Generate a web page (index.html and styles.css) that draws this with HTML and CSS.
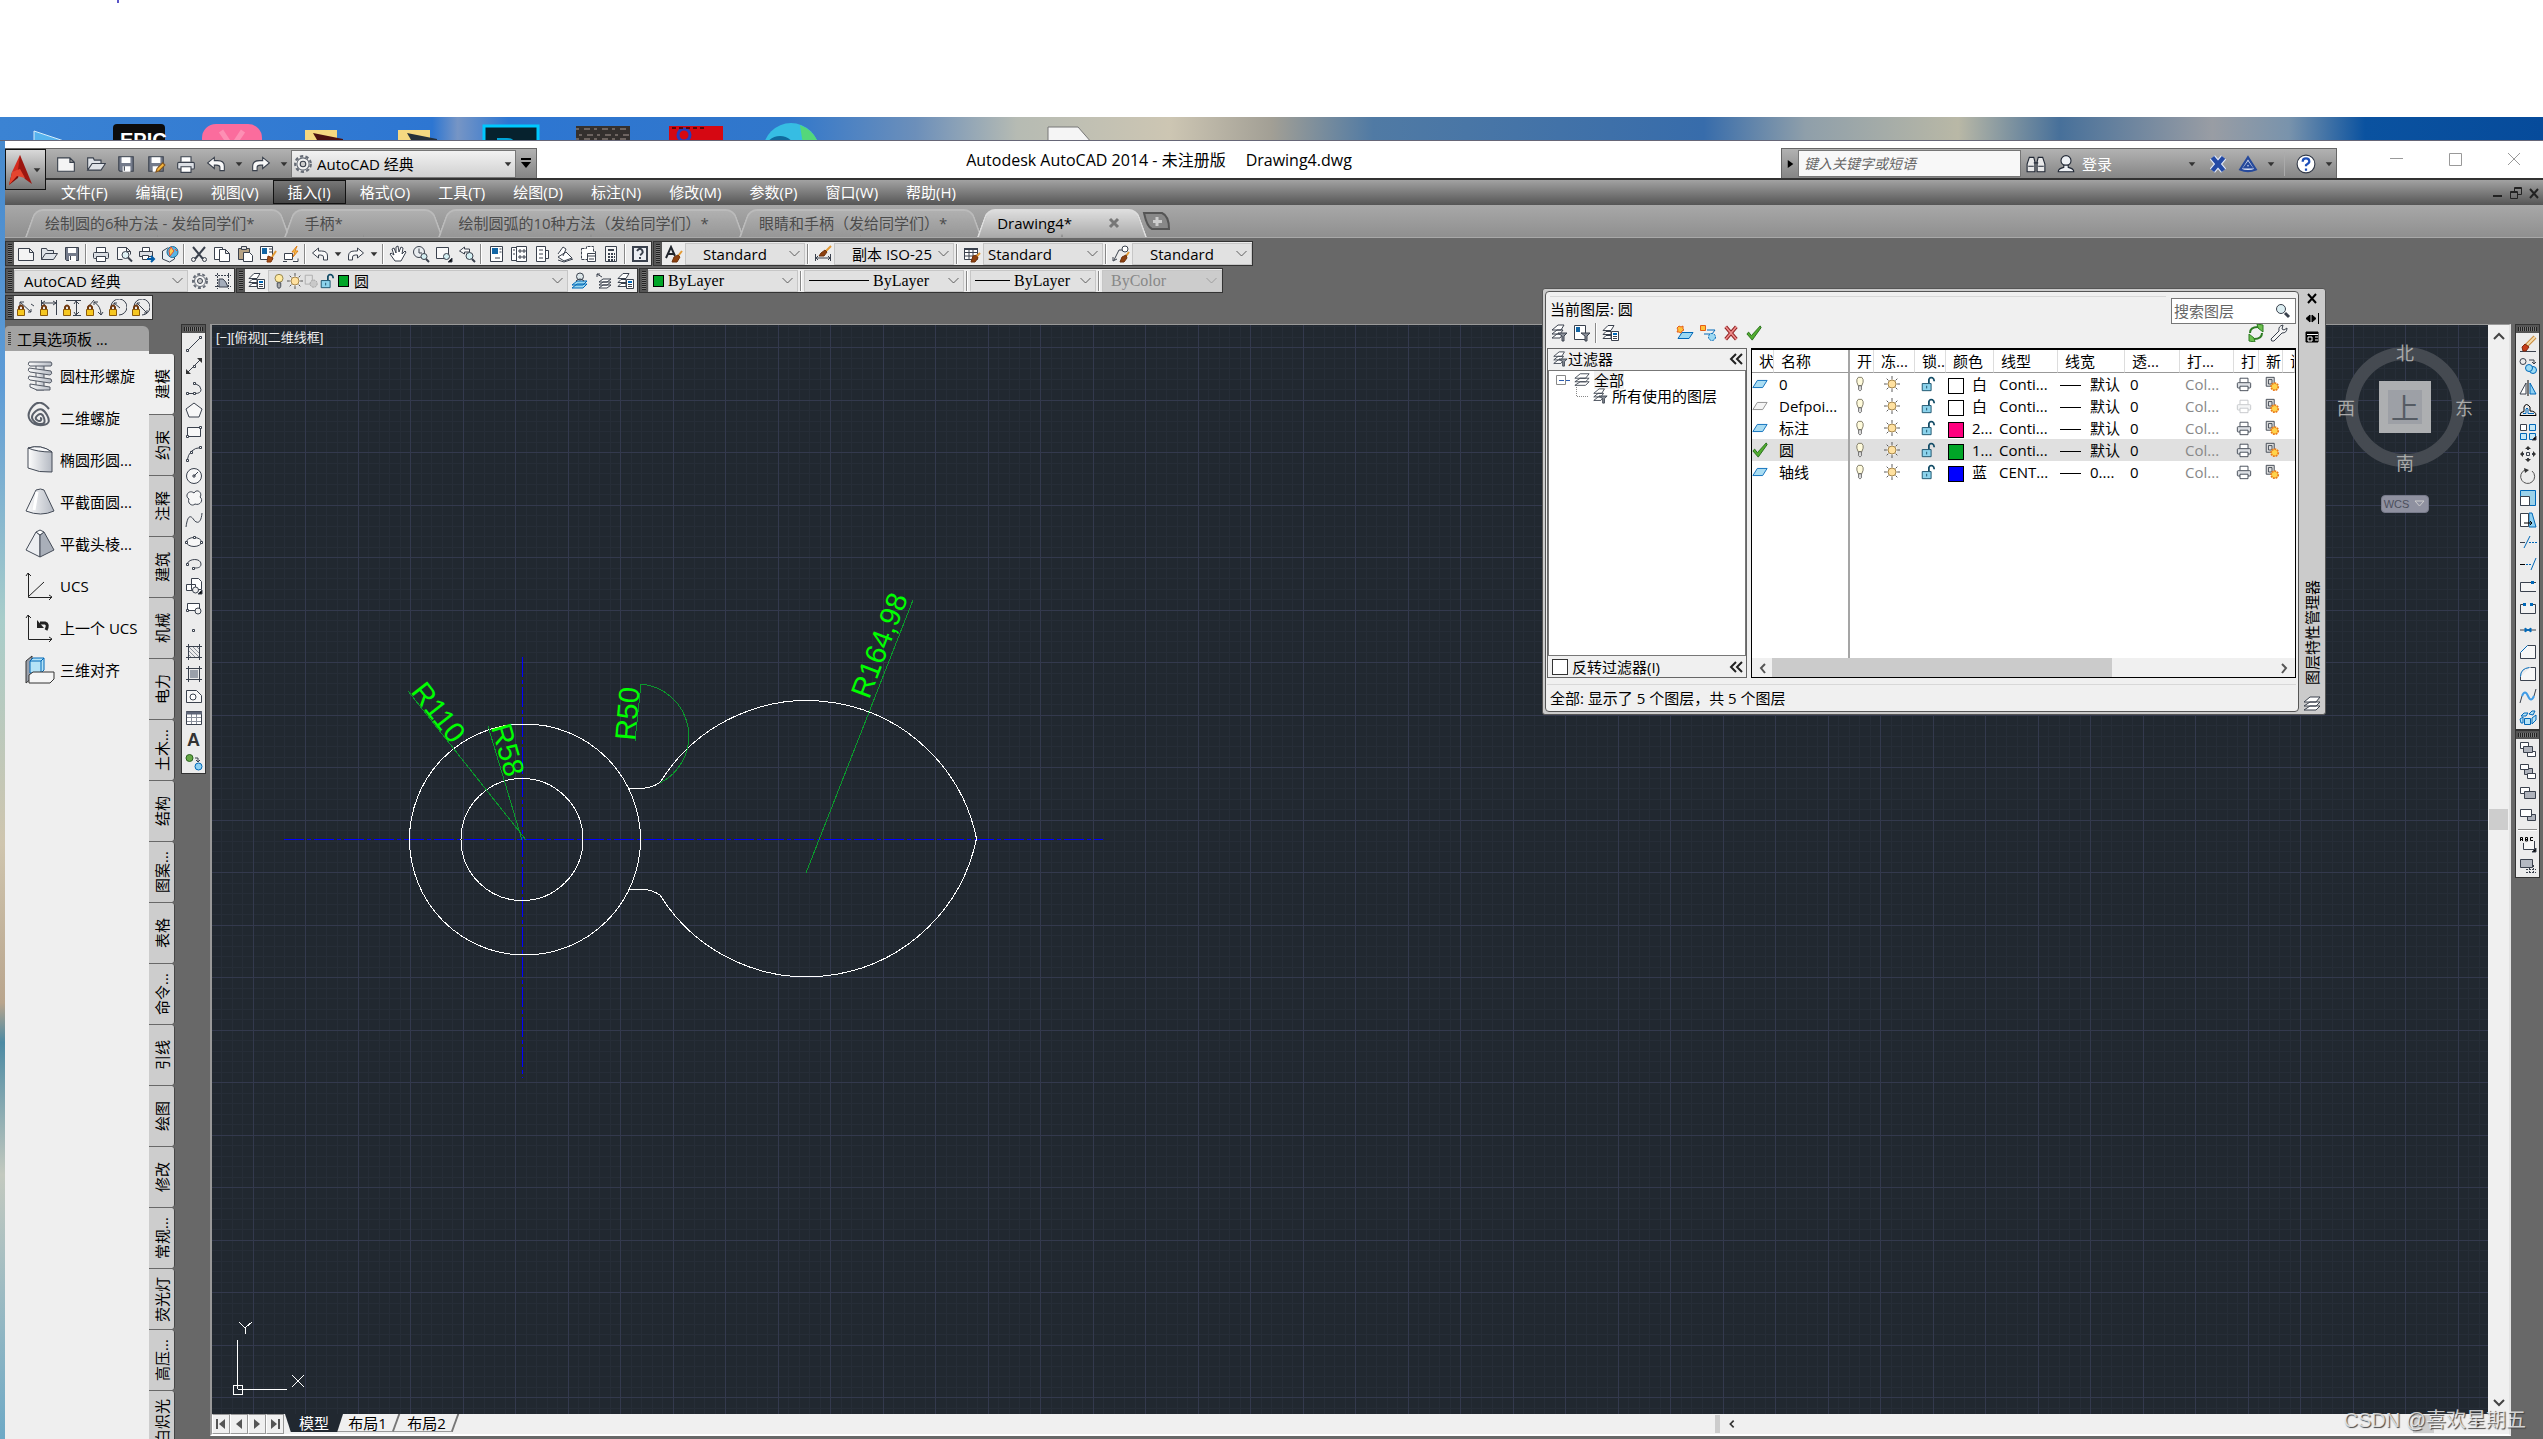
FILE: index.html
```html
<!DOCTYPE html>
<html lang="zh-CN">
<head>
    <meta charset="UTF-8">
    <meta name="viewport" content="width=device-width, initial-scale=1.0">
    <title>Autodesk AutoCAD 2014</title>
    <link rel="stylesheet" href="styles.css">
</head>
<body>
    <svg class="symbols" width="0" height="0" aria-hidden="true">
        <defs>
            <linearGradient id="metal" x1="0" y1="0" x2="1" y2="0"><stop offset="0" stop-color="#fdfdfd"/><stop offset="1" stop-color="#b4b9c2"/></linearGradient>
            <symbol id="new" viewBox="0 0 18 18"><path fill="#f4f4f4" d="M1.500 3.500h11l4 4v8h-15zM12.500 3.500v4h4"/></symbol>
            <symbol id="open" viewBox="0 0 18 18"><path fill="#dfe3e8" d="M1.500 14.500v-11h5l1 2h6v3M1.500 14.500l4-6h12l-4 6z"/></symbol>
            <symbol id="save" viewBox="0 0 18 18"><path fill="#747b8b" d="M2.500 2.500h13v13h-12l-1-1z"/><path fill="#fff" stroke="none" d="M5 3h8v5H5zM6 11h7v5H6z"/><path d="M7.500 11v4"/></symbol>
            <symbol id="saveas" viewBox="0 0 18 18"><path fill="#747b8b" d="M2.500 2.500h13v13h-13z"/><path fill="#fff" stroke="none" d="M5 3h8v5H5zM6 11h5v5H6z"/><path fill="#f5b63c" stroke="#86561d" d="M9 16l1-3 5-5 2 2-5 5z"/></symbol>
            <symbol id="print" viewBox="0 0 18 18"><path fill="#fff" d="M4.500 7V2.500h9V7"/><rect x="1.500" y="7.500" width="15" height="6" rx="1" fill="#dcdfe4"/><path fill="#fff" d="M4.500 11.500h9v5h-9z"/></symbol>
            <symbol id="preview" viewBox="0 0 18 18"><path fill="#f8f8f8" d="M2.500 14.500v-12h9l4 4v3M2.500 14.500h5M11.500 2.500v4h4"/><circle cx="10.500" cy="10" r="3.500" fill="#dff1f4"/><path stroke-width="2" d="M13 12.500l4 4"/></symbol>
            <symbol id="publish" viewBox="0 0 18 18"><path fill="#fff" d="M4.500 6V2.500h7V6"/><path fill="#dcdfe4" d="M1.500 6.500h13v5h-13z"/><path fill="#fff" d="M4.500 10.500h6v4h-6z"/><path stroke="#005ca8" stroke-width="2" d="M9 14h7M13 11l3 3-3 3"/></symbol>
            <symbol id="globe" viewBox="0 0 18 18"><path fill="#e7eef3" d="M1.500 6l5-3 7 2v9l-5 3-7-3z"/><circle cx="11.500" cy="7" r="5.500" fill="#58b5e4" stroke="#226b93"/><path fill="#f8cc4c" stroke="#e24f39" d="M10 2l3 4-4 5-1-5zM14 4l2 2"/></symbol>
            <symbol id="cut" viewBox="0 0 18 18"><path d="M3 2l10 12M15 2L5 14" stroke-width="2"/><circle cx="3.500" cy="14.500" r="2"/><circle cx="14.500" cy="14.500" r="2"/></symbol>
            <symbol id="copyclip" viewBox="0 0 18 18"><path fill="#fff" d="M1.500 2.500h8v12h-8z"/><path fill="#fff" d="M6.500 4.500h6l4 4v8h-10zM12.500 4.500v4h4"/></symbol>
            <symbol id="paste" viewBox="0 0 18 18"><path fill="#b6a284" d="M2.500 3.500h11v11h-11z"/><path fill="#ddd" d="M5.500 1.500h5v3h-5z"/><path fill="#fff" d="M7.500 7.500h6l3 3v6h-9z"/></symbol>
            <symbol id="match" viewBox="0 0 18 18"><path fill="#fff" d="M1.500 1.500h12v13h-12z"/><path fill="#1266a5" stroke="none" d="M3 3h5v6H3z"/><path d="M10 4h3M10 7h3"/><path stroke="#e39a34" stroke-width="2" d="M17 6l-4 6"/><path fill="#a74f15" stroke="#81370b" d="M9 11l5 2-2 4H8z"/></symbol>
            <symbol id="editor" viewBox="0 0 18 18"><path fill="#fff" d="M2.500 8.500h8v6h-8zM1 16.500h4M11 16.500h5v-3"/><path fill="#ffdc54" stroke="#dd7d1c" d="M15 1l-5 6h3l-2 5 5-6h-3z"/></symbol>
            <symbol id="undo" viewBox="0 0 18 18"><path fill="#f8f8f8" d="M1.500 8l6-5v3h3q6 0 6 5v4h-4v-3q0-2-3-2h-2v3z"/></symbol>
            <symbol id="redo" viewBox="0 0 18 18"><path fill="#f8f8f8" d="M16.500 8l-6-5v3h-3q-6 0-6 5v4h4v-3q0-2 3-2h2v3z"/></symbol>
            <symbol id="hand" viewBox="0 0 18 18"><path fill="#fff" d="M6 16l-5-7 1-1 3 2-2-6 2-1 2 5V2l2-1 1 6 2-5 2 1-1 6 3-3 1 1-5 9z"/></symbol>
            <symbol id="zoomrt" viewBox="0 0 18 18"><circle cx="7" cy="7" r="5.500" fill="#eaeef1"/><path d="M7 3.500V8h3"/><circle cx="12" cy="11.500" r="3" fill="#d4eff2"/><path stroke-width="2" d="M14 14l3 3"/></symbol>
            <symbol id="zoomwin" viewBox="0 0 18 18"><path fill="#f8f8f8" d="M1.500 2.500h12v11h-12z"/><circle cx="11.500" cy="11.500" r="3" fill="#d4eff2"/><path fill="#000" d="M17 13v4h-4z"/></symbol>
            <symbol id="zoomprev" viewBox="0 0 18 18"><path fill="#f8f8f8" d="M1.500 6l5-4v2h5v3h-5v2z"/><circle cx="11.500" cy="11" r="3.500" fill="#d4eff2"/><path stroke-width="2" d="M14 14l3 3"/></symbol>
            <symbol id="props" viewBox="0 0 18 18"><path fill="#fff" d="M3.500 1.500h12v15h-12z"/><path fill="#1266a5" stroke="none" d="M5 3h6v6H5z"/><path d="M12.500 4h2M12.500 7h2M8 13h5"/></symbol>
            <symbol id="dcenter" viewBox="0 0 18 18"><path fill="#fff" d="M1.500 2.500h5v13h-5zM6.500 1.500h10v15h-10z"/><path d="M3 5h2M3 9h2M9 5h2v2H9zM13 5h2v2h-2zM9 11h2v2H9zM13 11h2v2h-2z"/></symbol>
            <symbol id="palettes" viewBox="0 0 18 18"><path fill="#fff" d="M3.500 1.500h9v15h-9zM12.500 5.500h3v8h-3z"/><path d="M6 5h4M6 9h4M6 13h4"/></symbol>
            <symbol id="sheets" viewBox="0 0 18 18"><path fill="#fff" d="M2 12l8-5 6 6-8 3zM2 9L7 2l3 2-3 7M2 15l6 2 9-3"/></symbol>
            <symbol id="markup" viewBox="0 0 18 18"><path fill="#fff" stroke-dasharray="3 1" d="M2.500 3.500h5v-2h7v5h2v8h-14z"/><path fill="#fff" d="M8.500 8.500h8v8h-8z"/><path d="M8 11h8M10 14h5"/></symbol>
            <symbol id="calc" viewBox="0 0 18 18"><path fill="#f6f6f6" d="M3.500 1.500h11v15h-11z"/><path stroke-width="2" d="M6 5h6"/><path stroke-width="2" stroke-dasharray="2 1" d="M6 9h7M6 12h7M6 15h7"/></symbol>
            <symbol id="help" viewBox="0 0 18 18"><path fill="#eceff4" stroke-width="2" d="M2 2h14v14H2z"/><path stroke-width="2" d="M6 6q3-4 5-1t-2 5M9 12v2"/></symbol>
            <symbol id="textstyle" viewBox="0 0 18 18"><path stroke="#20252c" stroke-width="2" d="M1 13L6 2l4 9M3 9h6"/><path stroke="#e39a34" stroke-width="2" d="M17 6l-4 5"/><path fill="#8d410f" stroke="#6f330d" d="M9 12l4-2 2 2-3 5H7z"/></symbol>
            <symbol id="dimstyle" viewBox="0 0 18 18"><path d="M1.500 9v7M16.500 9v7M2 13h14M4 11l-2 2 2 2M14 11l2 2-2 2"/><path stroke="#e39a34" stroke-width="2" d="M17 1l-5 5"/><path fill="#8d410f" stroke="#6f330d" d="M7 8l4-3 2 2-3 4H5z"/></symbol>
            <symbol id="tablestyle" viewBox="0 0 18 18"><path fill="#fff" d="M1.500 3.500h13v11h-13zM1 7.500h13M1 11h13M6 4v10M10 4v10"/><path stroke-width="2" d="M1 4h14"/><path fill="#8d410f" stroke="#6f330d" d="M10 11l4-1 1 3-3 4H8z"/><path stroke="#e39a34" stroke-width="2" d="M17 8l-3 3"/></symbol>
            <symbol id="mleader" viewBox="0 0 18 18"><path d="M2 15l5-10h4M1 12v4l4-2"/><circle cx="13" cy="4" r="3" fill="#fff"/><path stroke="#e39a34" stroke-width="2" d="M17 7l-3 4"/><path fill="#8d410f" stroke="#6f330d" d="M10 12l4-2 1 3-3 4H8z"/></symbol>
            <symbol id="gear" viewBox="0 0 18 18"><circle cx="9" cy="9" r="7" fill="#f3f3f3" stroke-width="2" stroke-dasharray="3 2" stroke="#666c76"/><circle cx="9" cy="9" r="5.500" fill="#f3f3f3" stroke="#666c76"/><circle cx="9" cy="9" r="2.500" fill="#ccc"/></symbol>
            <symbol id="wslock" viewBox="0 0 18 18"><path stroke-dasharray="2 1" d="M1 3.500h16M1 14.500h16M3.500 1v16M14.500 1v16"/><path fill="#a5adba" d="M5 15V7h4q3 2 5 8z"/></symbol>
            <symbol id="layers" viewBox="0 0 18 18"><path fill="#fff" d="M1 6.500l5-5h6l-3 5zM1 10.500l3-3h5v3zM1 14.500l3-3h5v3z"/><path fill="#fff" d="M9.500 7.500h7v9h-7z"/><path stroke="#0068b8" stroke-width="2" d="M11 10h4"/><path d="M11 12.500h4M11 14.500h4"/></symbol>
            <symbol id="stack" viewBox="0 0 18 18"><path fill="#fff" d="M1 7l6-5h10l-4 5zM1 11l6-4h10l-4 4zM1 15l6-4h10l-4 4z"/></symbol>
            <symbol id="layiso" viewBox="0 0 18 18"><path fill="#9ad6ee" stroke="#0068b8" d="M1 13l5-4h10l-4 4zM1 16l5-4h10l-4 4z"/><circle cx="9" cy="4.500" r="3.500" fill="#dce6e9"/><path d="M5 9q4-4 8 0"/></symbol>
            <symbol id="layprev" viewBox="0 0 18 18"><path fill="#fff" d="M5 10l4-3h8l-4 3zM5 13l4-3h8l-4 3zM5 16l4-3h8l-4 3z"/><path d="M8 5l-5-3M3 5V2h3"/></symbol>
            <symbol id="bulb" viewBox="0 0 18 18"><circle cx="9" cy="6" r="4.500" fill="#ffeaa0" stroke="#8a7a45"/><path fill="#aaa" d="M7 11h4v4l-1 2H8l-1-2z"/></symbol>
            <symbol id="lamp" viewBox="0 0 18 18"><path fill="#fffbdc" stroke="#77725c" d="M7 11L5.500 7V4L7 1.500h4L12.500 4v3L11 11z"/><path fill="#eee" stroke="#555" d="M7.500 11h3v4.500l-1 1h-1l-1-1z"/></symbol>
            <symbol id="sun" viewBox="0 0 18 18"><path stroke="#444" d="M9 0v18M0 9h18M3 3l12 12M15 3L3 15"/><circle cx="9" cy="9" r="6" fill="#fff" stroke="none" opacity="0.6"/><circle cx="9" cy="9" r="4.500" fill="#ffe1a0" stroke="#9c7b3e"/></symbol>
            <symbol id="vpfreeze" viewBox="0 0 18 18"><path stroke="#aaa" d="M2.500 2.500h8v10h-8z"/><circle cx="12" cy="12" r="4" fill="#c9c9c9" stroke="#999" stroke-dasharray="2 1"/></symbol>
            <symbol id="unlock" viewBox="0 0 18 18"><path stroke="#134c66" stroke-width="2" d="M10 8V4q1-3 4-2 2 1 2 4"/><path fill="#8cd3ec" stroke="#134c66" d="M2.500 8.500h10v8h-10z"/><path stroke="#134c66" d="M7.500 11v3"/></symbol>
            <symbol id="lockbase" viewBox="0 0 18 18"><path stroke="#6f370d" stroke-width="2" d="M2 11V8q2-3 4 0v3"/><path fill="#f6c720" stroke="#8b5a0a" d="M.500 10.500h7v6h-7z"/></symbol>
            <symbol id="line" viewBox="0 0 18 18"><path d="M2.500 15.500l13-13"/><path fill="#fff" d="M1.500 14.500h2v2h-2zM14.500 1.500h2v2h-2z"/></symbol>
            <symbol id="xline" viewBox="0 0 18 18"><path d="M2 16L16 2"/><path fill="#333" stroke="none" d="M1 12v5h5zM12 1h5v5z"/><path fill="#fff" d="M8.500 8.500h2v2h-2z"/></symbol>
            <symbol id="pline" viewBox="0 0 18 18"><path d="M2 14.500h8q6 0 6-4t-6-6"/><path fill="#fff" d="M1.500 13.500h2v2h-2zM8.500 13.500h2v2h-2zM8.500 3.500h2v2h-2z"/></symbol>
            <symbol id="polygon" viewBox="0 0 18 18"><path fill="#f7f7f7" d="M9 2l8 6-3 8H4L1 8z"/></symbol>
            <symbol id="rect" viewBox="0 0 18 18"><path fill="#f7f7f7" d="M2.500 4.500h13v9h-13z"/><path fill="#fff" d="M1.500 12.500h2v2h-2zM14.500 3.500h2v2h-2z"/></symbol>
            <symbol id="arc" viewBox="0 0 18 18"><path d="M2 16Q4 3 16 2.500"/><path fill="#fff" d="M1.500 14.500h2v2h-2zM5.500 6.500h2v2h-2zM14.500 1.500h2v2h-2z"/></symbol>
            <symbol id="circle" viewBox="0 0 18 18"><circle cx="9" cy="9" r="7.500" fill="#f7f7f7"/><path d="M9 9l4-4M8 8h2v2H8z"/></symbol>
            <symbol id="cloud" viewBox="0 0 18 18"><path fill="#f7f7f7" d="M9 4c3-5 9 0 6 4 4 3 0 9-5 7-3 3-8-1-6-5-5-3 0-10 5-6z"/></symbol>
            <symbol id="spline" viewBox="0 0 18 18"><path d="M1 16C3 1 7 6 9 9s7 5 8-7"/></symbol>
            <symbol id="ellipse" viewBox="0 0 18 18"><ellipse cx="9" cy="9" rx="7.500" ry="4.500" fill="#f7f7f7"/><path fill="#fff" d="M.500 8.500h2v2h-2zM8.500 3.500h2v2h-2zM15.500 8.500h2v2h-2z"/></symbol>
            <symbol id="earc" viewBox="0 0 18 18"><path d="M2 9c2-6 14-6 14 0 0 4-4 4-7 4"/><path fill="#fff" d="M1.500 8.500h2v2h-2zM7.500 12.500h2v2h-2z"/></symbol>
            <symbol id="insert" viewBox="0 0 18 18"><path fill="#fff" d="M6.500 1.500h7l3 3v8h-10zM1.500 7.500h9v6h-9z"/><circle cx="10.500" cy="13" r="3" fill="#eee"/><path fill="#000" d="M17 13v4h-4z"/></symbol>
            <symbol id="block" viewBox="0 0 18 18"><path fill="#fff" d="M2.500 4.500h12v7h-12z"/><circle cx="13" cy="12" r="3" fill="#eee"/><path fill="#fff" d="M1.500 10.500h2v2h-2z"/></symbol>
            <symbol id="point" viewBox="0 0 18 18"><path fill="#fff" d="M7.500 8.500h2v2h-2z"/></symbol>
            <symbol id="hatch" viewBox="0 0 18 18"><path d="M1 3.500h16M1 14.500h16M3.500 1v16M14.500 1v16"/><path stroke="#8a909b" d="M4 4l10 10M4 8l6 6M8 4l6 6M4 12l2 2M12 4l2 2"/></symbol>
            <symbol id="gradient" viewBox="0 0 18 18"><path fill="#9aa0aa" stroke="none" d="M5 5h8v8H5z"/><path d="M1 3.500h16M1 14.500h16M3.500 1v16M14.500 1v16"/></symbol>
            <symbol id="region" viewBox="0 0 18 18"><path fill="#f7f7f7" d="M1.500 3.500h10l5 5v7h-15z"/><circle cx="8" cy="10" r="3" fill="#fff"/></symbol>
            <symbol id="table" viewBox="0 0 18 18"><path fill="#fff" d="M1.500 2.500h15v13h-15z"/><path stroke="#8a909b" d="M2 8.500h14M2 12.500h14M6.500 5v10M11.500 5v10"/><path stroke-width="3" stroke="#5e6577" d="M1 4h16"/></symbol>
            <symbol id="addsel" viewBox="0 0 18 18"><circle cx="4.500" cy="5" r="3.500" fill="#65a845" stroke="#2c6320"/><circle cx="13.500" cy="13.500" r="3.500" fill="#8fd0f2" stroke="#0068b8"/><path d="M10 5h3v4M11 7l2 2 2-2"/></symbol>
            <symbol id="erase" viewBox="0 0 18 18"><path d="M1 16.500h16"/><path stroke="#c98b3d" stroke-width="4" d="M7 11l9-9"/><path stroke="#f3dcae" stroke-width="2" d="M8 10l8-8"/><path fill="#c73d18" stroke="#7f290f" d="M3 12l3-3 4 3-3 4H4z"/></symbol>
            <symbol id="copy" viewBox="0 0 18 18"><circle cx="4" cy="4.500" r="3"/><g fill="#9ddcf5" stroke="#0068b8"><circle cx="14" cy="13" r="3.500"/><circle cx="10" cy="11" r="3.500"/></g><path d="M10 3h5v4M13 5l2 2 2-2"/></symbol>
            <symbol id="mirror" viewBox="0 0 18 18"><path fill="#fff" d="M7 4v11H1z"/><path fill="#8fd0f2" stroke="#0068b8" d="M11 4v11h6z"/><path stroke="#000" d="M9 1v16"/></symbol>
            <symbol id="offset" viewBox="0 0 18 18"><path stroke="#000" d="M1 14.500q0-4 4-4V6q2-5 6 0v4q6 0 6 4.500z"/><path stroke="#0068b8" d="M4 12.500h3V8q1-2 2 0v4.500h6"/></symbol>
            <symbol id="array" viewBox="0 0 18 18"><path fill="#fff" d="M1.500 1.500h6v6h-6z"/><path fill="#c6e8f7" stroke="#0068b8" d="M10.500 1.500h6v6h-6zM1.500 10.500h6v6h-6zM10.500 10.500h6v6h-6z"/><path fill="#000" d="M17 13v4h-4z"/></symbol>
            <symbol id="move" viewBox="0 0 18 18"><path stroke-width="2" d="M9 2v3M9 13v3M2 9h3M13 9h3"/><path fill="#333" stroke="none" d="M6 4l3-3 3 3zM6 14l3 3 3-3zM4 6L1 9l3 3zM14 6l3 3-3 3z"/><path d="M7.500 7.500h3v3h-3z"/></symbol>
            <symbol id="rotate" viewBox="0 0 18 18"><path stroke="#555" d="M13 4a7 7 0 1 1-7-1"/><path fill="#333" stroke="none" d="M5 1l5 2-4 3z"/></symbol>
            <symbol id="scale" viewBox="0 0 18 18"><path fill="#9cd2ea" stroke="#0068b8" d="M1.500 1.500h15v15h-15z"/><path fill="#fff" d="M1.500 7.500h9v9h-9z"/></symbol>
            <symbol id="stretch" viewBox="0 0 18 18"><path fill="#8fd0f2" stroke="#0068b8" d="M10 2h3l4 14h-7z"/><path fill="#fff" d="M1.500 2.500h8v13h-8z"/><path stroke="#000" d="M5 12h8M11 10l2 2-2 2"/></symbol>
            <symbol id="trim" viewBox="0 0 18 18"><path d="M1 9.500h5"/><path stroke="#0068b8" d="M5 15l6-12"/><path stroke="#0068b8" stroke-dasharray="2 1" d="M10 9.500h8"/></symbol>
            <symbol id="extend" viewBox="0 0 18 18"><path stroke="#000" d="M1 9.500h5"/><path stroke="#0068b8" d="M12 15l5-12"/><path stroke="#0068b8" stroke-dasharray="2 1" d="M7 9.500h6"/></symbol>
            <symbol id="breakpt" viewBox="0 0 18 18"><path fill="#f3f3f3" d="M17 5.500H1.500v9H17"/><path stroke="#0068b8" stroke-width="3" d="M12 5.500h3"/></symbol>
            <symbol id="break" viewBox="0 0 18 18"><path fill="#f3f3f3" d="M4 5.500H1.500v9h15v-9H14"/><path stroke="#0068b8" stroke-width="3" d="M4 5.500h3M11 5.500h3"/></symbol>
            <symbol id="join" viewBox="0 0 18 18"><path d="M1 9h16"/><path fill="#0068b8" stroke="#0068b8" d="M6 7l3 2-3 2zM12 7L9 9l3 2z"/></symbol>
            <symbol id="chamfer" viewBox="0 0 18 18"><path fill="#f7f7f7" d="M1.500 9.500v6h15v-13h-8"/><path stroke="#0068b8" d="M1.500 9.500l7-7"/></symbol>
            <symbol id="fillet" viewBox="0 0 18 18"><path fill="#f7f7f7" d="M1.500 11.500v4h15v-13h-5"/><path stroke="#0068b8" d="M1.500 11.500q0-8 9-9"/></symbol>
            <symbol id="blend" viewBox="0 0 18 18"><path d="M1 16l2-7M15 9l2-7"/><path stroke="#3e9be6" stroke-width="2" d="M3 9q3-7 6 0t6 0"/></symbol>
            <symbol id="explode" viewBox="0 0 18 18"><path fill="#b5e2f5" stroke="#0068b8" d="M2 7l3-3h4L7 7zM10 5l3-3h3l-2 4zM1 10l3-2v6H2zM5.500 9.500h6v6h-6zM13 9l4-3v5l-4 4z"/></symbol>
            <symbol id="order1" viewBox="0 0 18 18"><path fill="#fff" d="M1.500 1.500h8v6h-8zM8.500 10.500h8v5h-8z"/><path fill="#aeb2bb" d="M4.500 5.500h9v6h-9z"/></symbol>
            <symbol id="order2" viewBox="0 0 18 18"><path fill="#aeb2bb" d="M5.500 5.500h8v6h-8z"/><path fill="#fff" d="M1.500 1.500h8v5h-8zM8.500 10.500h8v5h-8z"/></symbol>
            <symbol id="order3" viewBox="0 0 18 18"><path fill="#fff" d="M1.500 2.500h9v6h-9z"/><path fill="#aeb2bb" d="M5.500 6.500h11v7h-11z"/></symbol>
            <symbol id="order4" viewBox="0 0 18 18"><path fill="#aeb2bb" d="M8.500 7.500h8v6h-8z"/><path fill="#fff" d="M1.500 2.500h11v7h-11z"/></symbol>
            <symbol id="abc" viewBox="0 0 18 18"><path stroke="#000" d="M1.500 6V2.500h2V6M1 4.500h3M6.500 6V2.500h2V6h-2M6 4.500h3M14 2.500h-2.500v3H14"/><path fill="#f7f7f7" d="M4.500 8v6.500h11V6"/><path fill="#000" d="M17 13v4h-4z"/></symbol>
            <symbol id="hatchback" viewBox="0 0 18 18"><path stroke-dasharray="2 1" d="M7 12.500h10M7 15.500h10M10.500 8v9M14.500 8v9"/><path fill="#b4b9c2" d="M1.500 2.500h12v8h-12z"/></symbol>
            <symbol id="filter" viewBox="0 0 18 18"><path fill="#fff" d="M2 6l6-5h6l-3 5zM2 10l5-4h6l-3 4zM2 14l5-4h6l-3 4z"/><path fill="#8b9099" d="M8 9h9l-3 3v5h-2v-5z"/></symbol>
            <symbol id="groupfilter" viewBox="0 0 18 18"><path fill="#fff" d="M1.500 1.500h11v14h-11z"/><path fill="#1266a5" stroke="none" d="M3 3h4v5H3z"/><path fill="#8b9099" d="M8 9h9l-3 3v5h-2v-5z"/></symbol>
            <symbol id="newlayer" viewBox="0 0 18 18"><path fill="#9cd8f2" stroke="#0068b8" d="M2 14.500l4-6h11l-4 6z"/><path fill="#ffc13a" stroke="#e55d16" d="M3 2l2 1 2-1v3l1 1-2 1-1 2-2-1H1l1-2-1-2z"/></symbol>
            <symbol id="newfrozen" viewBox="0 0 18 18"><path fill="#ffc13a" stroke="#e55d16" d="M1.500 1.500h5v5h-5z"/><path stroke="#0068b8" d="M8 6h8l-3 4H5"/><circle cx="13" cy="13" r="3.500" fill="#9cd8f2" stroke="#0068b8" stroke-dasharray="2 1"/></symbol>
            <symbol id="delete" viewBox="0 0 18 18"><path stroke="#8e2020" stroke-width="4" d="M3 2l12 14M15 2L3 16"/><path stroke="#ef8a8a" stroke-width="2" d="M3 2l12 14M15 2L3 16"/></symbol>
            <symbol id="check" viewBox="0 0 18 18"><path fill="#53ad30" stroke="#1f6913" d="M1 10l2-2 3 4L16 1l1 2L7 17z"/></symbol>
            <symbol id="refresh" viewBox="0 0 18 18"><path stroke="#2c7b22" stroke-width="2" d="M3 9q0-6 8-6M15 9q0 6-8 6"/><path fill="#6cc04e" stroke="#2c7b22" d="M10 0l6 1v7l-5-4zM8 18l-6-1v-7l5 4z"/></symbol>
            <symbol id="wrench" viewBox="0 0 18 18"><path fill="#f5f5f5" d="M1 15l8-8q-1-5 4-6l-1 4 2 1 3-2q0 5-5 5l-8 8q-3 1-3-2z"/></symbol>
            <symbol id="sheet" viewBox="0 0 18 18"><path fill="#a9dcf2" stroke="#0068b8" d="M1 13l5-8h11l-5 8z"/></symbol>
            <symbol id="sheetoff" viewBox="0 0 18 18"><path fill="#f4f4f4" stroke="#888" d="M1 13l5-8h11l-5 8z"/></symbol>
            <symbol id="vpnew" viewBox="0 0 18 18"><path fill="#ddd" d="M2.500 1.500h9v10h-9zM5 4h4v5H5z"/><circle cx="12" cy="12" r="4" fill="#ffd34c" stroke="#e9791c" stroke-width="2" stroke-dasharray="2 1"/></symbol>
            <symbol id="chev" viewBox="0 0 18 18"><path stroke="#444" d="M3 6l6 6 6-6"/></symbol>
            <symbol id="tri" viewBox="0 0 18 18"><path fill="#333" stroke="none" d="M3 6h12l-6 7z"/></symbol>
        </defs>
    </svg>

    <div class="page-top"><span class="cursor-mark"></span></div>
    <main class="desktop">
        <svg class="desk-icons" aria-hidden="true">
            <path fill="#56b3ee" stroke="#d5ecfa" d="M34 14v12h36z"/>
            <rect x="113" y="7" width="52" height="30" rx="4" fill="#0c0c0c"/><text x="120" y="30" class="epic">EPIC</text>
            <rect x="202" y="7" width="60" height="30" rx="14" fill="#fb6c9d"/><path stroke="#fd8fb4" stroke-width="5" d="M221 14l8 12M243 14l-8 12"/>
            <path fill="#f5d881" d="M305 13h32v20h-32zM398 13h32v20h-32z"/><path fill="#4b1010" d="M313 16l30 6v8h-22z"/><path fill="#26303a" d="M407 16l30 6v8h-22z"/>
            <rect x="484" y="9" width="54" height="30" fill="#06222e" stroke="#00c8ff" stroke-width="3"/><path stroke="#00a4d8" stroke-width="4" d="M497 23h10q7 0 7 8" fill="none"/>
            <rect x="576" y="9" width="54" height="20" fill="#34302e"/><path stroke="#6d6460" stroke-width="2" stroke-dasharray="3 5 6 4" d="M576 12h54M579 18h50M576 22h54"/>
            <rect x="669" y="9" width="54" height="20" fill="#d60812"/><circle cx="684" cy="18" r="6" fill="none" stroke="#263dba" stroke-width="3"/><path stroke="#5c0507" stroke-width="2" stroke-dasharray="4 3" d="M672 11h34"/>
            <circle cx="791" cy="34" r="28" fill="#36bde3"/><path fill="#54d77a" d="M800 8q15 6 19 20h-16z"/><circle cx="780" cy="35" r="16" fill="#116a9d"/>
            <path fill="#f5f5f5" stroke="#777" d="M1048 10h30l14 16h-44z"/>
        </svg>

        <div class="app">
            <header class="titlebar">
                <button class="app-button" aria-label="应用程序菜单">
                    <svg width="23" height="30" viewBox="0 0 23 30"><path fill="#d42a1e" d="M11 0l-8 17 7-2 2-6z"/><path fill="#9c1610" d="M11 0l12 29-7-5-7-9z"/><path fill="#7d0f0a" d="M3 17L0 30l9-7 2-8z"/><path fill="#e5452f" d="M3 17l8-3 5 9-8-2-8 9z"/></svg>
                    <svg class="ic tiny"><use href="#tri"/></svg>
                </button>
                <div class="quick">
                    <button aria-label="新建"><svg class="ic big"><use href="#new"/></svg></button>
                    <button aria-label="打开"><svg class="ic big"><use href="#open"/></svg></button>
                    <button aria-label="保存"><svg class="ic big"><use href="#save"/></svg></button>
                    <button aria-label="另存为"><svg class="ic big"><use href="#saveas"/></svg></button>
                    <button aria-label="打印"><svg class="ic big"><use href="#print"/></svg></button>
                    <button aria-label="放弃"><svg class="ic big"><use href="#undo"/></svg></button>
                    <button class="drop" aria-label="放弃列表"><svg class="ic tiny"><use href="#tri"/></svg></button>
                    <button aria-label="重做"><svg class="ic big"><use href="#redo"/></svg></button>
                    <button class="drop" aria-label="重做列表"><svg class="ic tiny"><use href="#tri"/></svg></button>
                    <div class="combo quick-space"><svg class="ic big"><use href="#gear"/></svg><select aria-label="工作空间"><option>AutoCAD 经典</option></select><svg class="ic tiny"><use href="#tri"/></svg></div>
                    <button class="quick-more" aria-label="自定义"><svg class="ic"><path stroke="#000" stroke-width="2" d="M4 4h10"/><path fill="#000" stroke="none" d="M4 7h10l-5 6z"/></svg></button>
                </div>
                <h1 class="title"><span>Autodesk AutoCAD 2014 - 未注册版</span><span>Drawing4.dwg</span></h1>
                <div class="info">
                    <button class="info-toggle" aria-label="折叠"><svg class="ic tiny" viewBox="0 0 18 18"><path fill="#000" stroke="none" d="M5 2l10 7-10 7z"/></svg></button>
                    <input class="info-search" type="text" placeholder="键入关键字或短语" aria-label="键入关键字或短语">
                    <button aria-label="搜索"><svg class="ic big" viewBox="0 0 18 18"><path fill="#e9e9e9" stroke="#222936" d="M3 3h4l1 4v9H1V9zM11 3h4l2 6v7h-7V7zM7 8h4M2 11h5M11 11h5"/></svg></button>
                    <button class="login"><svg class="ic big" viewBox="0 0 18 18"><circle cx="9" cy="6" r="4.500" fill="#eef1f5" stroke="#222936"/><path fill="#eef1f5" stroke="#222936" d="M2 16q0-3 5-4v-2h4v2q5 1 5 4z"/></svg><span>登录</span><svg class="ic tiny"><use href="#tri"/></svg></button>
                    <button aria-label="Exchange"><svg class="ic big" viewBox="0 0 18 18"><path stroke="#e2e9f8" stroke-width="6" d="M4 3l10 12M14 3L4 15"/><path stroke="#2349a5" stroke-width="4" d="M4 3l10 12M14 3L4 15"/></svg></button>
                    <button aria-label="保持连接"><svg class="ic big" viewBox="0 0 18 18"><path fill="#e2e9f8" stroke="#26499b" stroke-width="2" d="M9 3l7 11q-7 3-14 0zM9 8l3 4H6z"/></svg></button>
                    <button class="drop" aria-label="连接列表"><svg class="ic tiny"><use href="#tri"/></svg></button>
                    <span class="info-sep"></span>
                    <button aria-label="帮助"><svg class="ic big" viewBox="0 0 18 18"><circle cx="9" cy="9" r="8" fill="#fff" stroke="#333a48"/><path stroke="#1e4fb8" stroke-width="2" d="M6 7q0-3 3-3t3 3q0 1-3 3v1M9 13v2"/></svg></button>
                    <button class="drop" aria-label="帮助列表"><svg class="ic tiny"><use href="#tri"/></svg></button>
                </div>
                <div class="win-buttons">
                    <button aria-label="最小化"><svg class="ic wide"><path stroke="#999" d="M3 7.500h13"/></svg></button>
                    <button aria-label="最大化"><svg class="ic wide"><path stroke="#999" d="M3.500 2.500h12v12h-12z"/></svg></button>
                    <button aria-label="关闭"><svg class="ic wide"><path stroke="#999" d="M3 2l12 12M15 2L3 14"/></svg></button>
                </div>
            </header>

            <nav class="menubar">
                <button>文件(F)</button>
                <button>编辑(E)</button>
                <button>视图(V)</button>
                <button class="active">插入(I)</button>
                <button>格式(O)</button>
                <button>工具(T)</button>
                <button>绘图(D)</button>
                <button>标注(N)</button>
                <button>修改(M)</button>
                <button>参数(P)</button>
                <button>窗口(W)</button>
                <button>帮助(H)</button>
                <div class="mdi">
                    <button aria-label="最小化图形"><svg class="ic"><path stroke="#222" stroke-width="2" d="M4 12h9"/></svg></button>
                    <button aria-label="还原图形"><svg class="ic"><path stroke="#222" d="M3.500 7.500h7v7h-7zM7.500 7V3.500h7v7H11M7 4.500h8M3 8.500h8"/></svg></button>
                    <button aria-label="关闭图形"><svg class="ic"><path stroke="#222" stroke-width="2" d="M5 5l8 9M13 5l-8 9"/></svg></button>
                </div>
            </nav>

            <div class="file-tabs">
                <button class="file-tab"><span>绘制圆的6种方法 - 发给同学们*</span></button>
                <button class="file-tab"><span>手柄*</span></button>
                <button class="file-tab"><span>绘制圆弧的10种方法（发给同学们）*</span></button>
                <button class="file-tab"><span>眼睛和手柄（发给同学们）*</span></button>
                <button class="file-tab current"><span>Drawing4*</span><svg class="ic close"><path stroke="#777" stroke-width="3" d="M4 5l8 8M12 5l-8 8"/></svg></button>
                <button class="add-tab" aria-label="新建选项卡"><svg width="30" height="22"><path fill="#888" stroke="#555" stroke-width="2" d="M2 2h18q7 3 7 16H10Q5 16 2 2z"/><path stroke="#ccc" stroke-width="3" d="M15 6v9M11 10.500h9"/></svg></button>
            </div>

            <section class="docks">
                <div class="dock-row">
                    <div class="toolbar">
                        <span class="grip"></span>
                        <button aria-label="新建"><svg class="ic"><use href="#new"/></svg></button>
                        <button aria-label="打开"><svg class="ic"><use href="#open"/></svg></button>
                        <button aria-label="保存"><svg class="ic"><use href="#save"/></svg></button>
                        <span class="sep"></span>
                        <button aria-label="打印"><svg class="ic"><use href="#print"/></svg></button>
                        <button aria-label="打印预览"><svg class="ic"><use href="#preview"/></svg></button>
                        <button aria-label="发布"><svg class="ic"><use href="#publish"/></svg></button>
                        <button aria-label="三维打印"><svg class="ic"><use href="#globe"/></svg></button>
                        <span class="sep"></span>
                        <button aria-label="剪切"><svg class="ic"><use href="#cut"/></svg></button>
                        <button aria-label="复制"><svg class="ic"><use href="#copyclip"/></svg></button>
                        <button aria-label="粘贴"><svg class="ic"><use href="#paste"/></svg></button>
                        <button aria-label="特性匹配"><svg class="ic"><use href="#match"/></svg></button>
                        <button aria-label="块编辑器"><svg class="ic"><use href="#editor"/></svg></button>
                        <span class="sep"></span>
                        <button aria-label="放弃"><svg class="ic"><use href="#undo"/></svg></button>
                        <button class="drop" aria-label="放弃列表"><svg class="ic tiny"><use href="#tri"/></svg></button>
                        <button aria-label="重做"><svg class="ic"><use href="#redo"/></svg></button>
                        <button class="drop" aria-label="重做列表"><svg class="ic tiny"><use href="#tri"/></svg></button>
                        <span class="sep"></span>
                        <button aria-label="平移"><svg class="ic"><use href="#hand"/></svg></button>
                        <button aria-label="实时缩放"><svg class="ic"><use href="#zoomrt"/></svg></button>
                        <button aria-label="窗口缩放"><svg class="ic"><use href="#zoomwin"/></svg></button>
                        <button aria-label="缩放上一个"><svg class="ic"><use href="#zoomprev"/></svg></button>
                        <span class="sep"></span>
                        <button aria-label="特性"><svg class="ic"><use href="#props"/></svg></button>
                        <button aria-label="设计中心"><svg class="ic"><use href="#dcenter"/></svg></button>
                        <button aria-label="工具选项板"><svg class="ic"><use href="#palettes"/></svg></button>
                        <button aria-label="图纸集"><svg class="ic"><use href="#sheets"/></svg></button>
                        <button aria-label="标记集"><svg class="ic"><use href="#markup"/></svg></button>
                        <button aria-label="计算器"><svg class="ic"><use href="#calc"/></svg></button>
                        <span class="sep"></span>
                        <button aria-label="帮助"><svg class="ic"><use href="#help"/></svg></button>
                    </div>
                    <div class="toolbar">
                        <span class="grip"></span>
                        <button aria-label="文字样式"><svg class="ic"><use href="#textstyle"/></svg></button>
                        <div class="combo w120"><select class="inset" aria-label="文字样式"><option>Standard</option></select><svg class="ic chev"><use href="#chev"/></svg></div>
                        <span class="sep"></span>
                        <button aria-label="标注样式"><svg class="ic"><use href="#dimstyle"/></svg></button>
                        <div class="combo w120"><select class="inset" aria-label="标注样式"><option>副本 ISO-25</option></select><svg class="ic chev"><use href="#chev"/></svg></div>
                        <span class="sep"></span>
                        <button aria-label="表格样式"><svg class="ic"><use href="#tablestyle"/></svg></button>
                        <div class="combo w120"><select aria-label="表格样式"><option>Standard</option></select><svg class="ic chev"><use href="#chev"/></svg></div>
                        <span class="sep"></span>
                        <button aria-label="引线样式"><svg class="ic"><use href="#mleader"/></svg></button>
                        <div class="combo w120"><select class="inset" aria-label="引线样式"><option>Standard</option></select><svg class="ic chev"><use href="#chev"/></svg></div>
                    </div>
                </div>
                <div class="dock-row">
                    <div class="toolbar">
                        <span class="grip"></span>
                        <div class="combo space-combo"><select aria-label="工作空间"><option>AutoCAD 经典</option></select><svg class="ic chev"><use href="#chev"/></svg></div>
                        <button aria-label="工作空间设置"><svg class="ic"><use href="#gear"/></svg></button>
                        <button aria-label="锁定位置"><svg class="ic"><use href="#wslock"/></svg></button>
                    </div>
                    <div class="toolbar">
                        <span class="grip"></span>
                        <button aria-label="图层特性"><svg class="ic"><use href="#layers"/></svg></button>
                        <div class="combo layer-combo">
                            <span class="layer-flags"><svg class="ic small"><use href="#bulb"/></svg><svg class="ic small"><use href="#sun"/></svg><svg class="ic small"><use href="#vpfreeze"/></svg><svg class="ic small"><use href="#unlock"/></svg><i class="chip green"></i></span>
                            <select aria-label="图层"><option>圆</option></select><svg class="ic chev"><use href="#chev"/></svg>
                        </div>
                        <button aria-label="置为当前"><svg class="ic"><use href="#layiso"/></svg></button>
                        <button aria-label="上一个图层"><svg class="ic"><use href="#layprev"/></svg></button>
                        <button aria-label="图层状态"><svg class="ic"><use href="#layers"/></svg></button>
                    </div>
                    <div class="toolbar bylayer">
                        <span class="grip"></span>
                        <div class="combo w150"><i class="chip green"></i><select aria-label="颜色"><option>ByLayer</option></select><svg class="ic chev"><use href="#chev"/></svg></div>
                        <span class="sep"></span>
                        <div class="combo w160"><i class="rule long"></i><select aria-label="线型"><option>ByLayer</option></select><svg class="ic chev"><use href="#chev"/></svg></div>
                        <span class="sep"></span>
                        <div class="combo w126"><i class="rule"></i><select aria-label="线宽"><option>ByLayer</option></select><svg class="ic chev"><use href="#chev"/></svg></div>
                        <span class="sep"></span>
                        <div class="combo w120 off"><select aria-label="打印样式" disabled><option>ByColor</option></select><svg class="ic chev"><use href="#chev"/></svg></div>
                    </div>
                </div>
                <div class="dock-row">
                    <div class="toolbar">
                        <span class="grip"></span>
                        <button aria-label="对齐约束"><svg class="ic"><path d="M3 3l11 10M3 7V3h4M11 13h3v-3M14 5l3 2"/><use href="#lockbase"/></svg></button>
                        <button aria-label="水平约束"><svg class="ic"><path d="M1.500 1v6M16.500 1v15M2 4h14M5 2L2 4l3 2M13 2l3 2-3 2"/><use href="#lockbase"/></svg></button>
                        <button aria-label="竖直约束"><svg class="ic"><path d="M3 1.500h15M10 16.500h8M13.500 2v14M11 5l2-3 3 3M11 13l2 3 3-3"/><use href="#lockbase"/></svg></button>
                        <button aria-label="角度约束"><svg class="ic"><path d="M2 8L8 1M8 3q7 4 7 13M8 6V3h4M12 13l3 3 2-3"/><use href="#lockbase"/></svg></button>
                        <button aria-label="半径约束"><svg class="ic"><path d="M2 7a8 8 0 1 1 8 9M11 9L5 4M5 7V4h3"/><use href="#lockbase"/></svg></button>
                        <button aria-label="直径约束"><svg class="ic"><path d="M2 7a8 8 0 1 1 8 9M15 14L5 4M5 7V4h3M15 11v3h-3"/><use href="#lockbase"/></svg></button>
                    </div>
                </div>
            </section>

            <section class="workspace">
                <aside class="palette">
                    <h2 class="palette-title"><span class="dots"></span>工具选项板 ...</h2>
                    <div class="palette-main">
                        <ul class="tools">
                            <li><svg class="tool-ic" viewBox="0 0 30 32"><g fill="url(#metal)" stroke="#555b66"><path d="M11 3h8v27h-8z"/><path d="M4 2h22q2 2 0 4H5q-3-1-1-4zM4 8l22 3q2 3-1 4L5 12q-3-1-1-4zM4 16l22 3q2 3-1 4L5 20q-3-1-1-4zM5 24l20 3v3H12l-7-3z"/></g></svg>圆柱形螺旋</li>
                            <li><svg class="tool-ic" viewBox="0 0 30 32"><path fill="none" stroke="#5a606a" stroke-width="2" d="M15 16q2 0 1 2t-4 0 1-5 6 3-3 6-8-4 3-9 11 4-4 10-13-5 3-14 16 3"/></svg>二维螺旋</li>
                            <li><svg class="tool-ic" viewBox="0 0 30 32"><path fill="url(#metal)" stroke="#444b57" d="M3 4q13-4 24 4v20q-13 1-24-4z"/><path fill="#f6f7f9" stroke="#444b57" d="M3 4q13-4 24 4Q12 8 3 4z"/></svg>椭圆形圆...</li>
                            <li><svg class="tool-ic" viewBox="0 0 30 32"><path fill="url(#metal)" stroke="#444b57" d="M11 4q5-2 8 0l10 21q-13 6-28 0z"/><path stroke="#fff" stroke-width="3" d="M12 6L9 24"/></svg>平截面圆...</li>
                            <li><svg class="tool-ic" viewBox="0 0 30 32"><path fill="#eceef1" stroke="#444b57" d="M11 4l4 3v22L1 22z"/><path fill="#a9afb9" stroke="#444b57" d="M19 4l-4 3v22l14-7z"/><path fill="#fff" stroke="#444b57" d="M11 4l4-2 4 2-4 3z"/></svg>平截头棱...</li>
                            <li><svg class="tool-ic" viewBox="0 0 30 32"><path fill="none" stroke="#222" d="M3.500 3v24.500h23M3 27L19 12M1 6l2-3 3 3M24 25l3 2-3 3"/></svg>UCS</li>
                            <li><svg class="tool-ic" viewBox="0 0 30 32"><path fill="none" stroke="#222" d="M3.500 3v24.500h23M1 6l2-3 3 3M24 25l3 2-3 3"/><path fill="none" stroke="#222" stroke-width="3" d="M15 11h5q4 1 1 7"/><path fill="#222" d="M12 8v8h7z"/></svg>上一个 UCS</li>
                            <li><svg class="tool-ic" viewBox="0 0 30 32"><path fill="#9aa0aa" stroke="#333" d="M1 7l6-5v22l-6 5z"/><path fill="#b4e3f7" stroke="#0068b8" d="M5 7l3-3h11v12l-3 3H5zM5 7h11v12M16 7l3-3"/><path fill="#f5f5f5" stroke="#333" d="M4 21l4-3h21v7l-4 4H4z"/></svg>三维对齐</li>
                        </ul>
                        <div class="side-tabs">
                            <button class="current">建模</button>
                            <button>约束</button>
                            <button>注释</button>
                            <button>建筑</button>
                            <button>机械</button>
                            <button>电力</button>
                            <button>土木...</button>
                            <button>结构</button>
                            <button>图案...</button>
                            <button>表格</button>
                            <button>命令...</button>
                            <button>引线</button>
                            <button>绘图</button>
                            <button>修改</button>
                            <button>常规...</button>
                            <button>荧光灯</button>
                            <button>高压...</button>
                            <button>白炽光</button>
                        </div>
                    </div>
                </aside>

                <div class="toolbar vertical">
                    <span class="grip"></span>
                    <button aria-label="直线"><svg class="ic"><use href="#line"/></svg></button>
                    <button aria-label="构造线"><svg class="ic"><use href="#xline"/></svg></button>
                    <button aria-label="多段线"><svg class="ic"><use href="#pline"/></svg></button>
                    <button aria-label="多边形"><svg class="ic"><use href="#polygon"/></svg></button>
                    <button aria-label="矩形"><svg class="ic"><use href="#rect"/></svg></button>
                    <button aria-label="圆弧"><svg class="ic"><use href="#arc"/></svg></button>
                    <button aria-label="圆"><svg class="ic"><use href="#circle"/></svg></button>
                    <button aria-label="修订云线"><svg class="ic"><use href="#cloud"/></svg></button>
                    <button aria-label="样条曲线"><svg class="ic"><use href="#spline"/></svg></button>
                    <button aria-label="椭圆"><svg class="ic"><use href="#ellipse"/></svg></button>
                    <button aria-label="椭圆弧"><svg class="ic"><use href="#earc"/></svg></button>
                    <button aria-label="插入块"><svg class="ic"><use href="#insert"/></svg></button>
                    <button aria-label="创建块"><svg class="ic"><use href="#block"/></svg></button>
                    <button aria-label="点"><svg class="ic"><use href="#point"/></svg></button>
                    <button aria-label="图案填充"><svg class="ic"><use href="#hatch"/></svg></button>
                    <button aria-label="渐变色"><svg class="ic"><use href="#gradient"/></svg></button>
                    <button aria-label="面域"><svg class="ic"><use href="#region"/></svg></button>
                    <button aria-label="表格"><svg class="ic"><use href="#table"/></svg></button>
                    <button class="mtext">A</button>
                    <button aria-label="添加选定对象"><svg class="ic"><use href="#addsel"/></svg></button>
                </div>

                <div class="drawing">
                    <div class="canvas-row">
                        <div class="canvas">
                            <svg class="scene">
                                <defs>
                                    <!-- two major cells per tile keep the lines on whole pixels -->
                                    <pattern id="grid" width="105" height="105" x="41" y="75" patternUnits="userSpaceOnUse">
                                        <path stroke="#262d37" d="M10.500 0v105M21.500 0v105M31.500 0v105M42.500 0v105M63.500 0v105M73.500 0v105M84.500 0v105M94.500 0v105M0 10.500h105M0 21.500h105M0 31.500h105M0 42.500h105M0 63.500h105M0 73.500h105M0 84.500h105M0 94.500h105"/>
                                        <path stroke="#33394d" d="M.500 0v105M52.500 0v105M0 .500h105M0 52.500h105"/>
                                    </pattern>
                                </defs>
                                <rect width="100%" height="100%" fill="url(#grid)"/>
                                <g transform="translate(-212 -325)" fill="none" shape-rendering="crispEdges">
                                    <path class="axis" d="M284 839.500h819M522.500 657v421"/>
                                    <g stroke="#fff">
                                        <circle cx="525" cy="839.500" r="115.500"/>
                                        <circle cx="522" cy="839.500" r="61"/>
                                        <path d="M629 788.500h10q12 0 21-6A173 173 0 0 1 976.500 838.500A173 173 0 0 1 660 895q-9-6-21-6h-10"/>
                                    </g>
                                    <g stroke="#0a9a2c">
                                        <path d="M408 691l118 149M488 726l34 114M913 600L806 873M635 741l6-57"/>
                                        <path d="M641 684A52.400 52.400 0 0 1 660 783"/>
                                    </g>
                                    <g class="dims">
                                        <text transform="translate(410 692) rotate(52)">R110</text>
                                        <text transform="translate(491 727) rotate(74)">R58</text>
                                        <text transform="translate(635 741) rotate(-85)">R50</text>
                                        <text transform="translate(869 700) rotate(-69)">R164,98</text>
                                    </g>
                                </g>
                            </svg>
                            <div class="view-label">[−][俯视][二维线框]</div>
                            <svg class="ucs" width="80" height="80"><g fill="none" stroke="#fff" shape-rendering="crispEdges"><path d="M5.500 65V20M5.500 69.500h49M1.500 65.500h9v9h-9zM5.500 65v4"/><path d="M7 2l6 6v6M20 2l-7 6M60 55l12 12M72 55L60 67"/></g></svg>
                            <div class="viewcube">
                                <span class="north">北</span><span class="west">西</span>
                                <span class="face">上</span>
                                <span class="east">东</span><span class="south">南</span>
                            </div>
                            <button class="wcs">WCS<svg width="12" height="8"><path fill="none" stroke="#ccc" d="M1 1h9L5.500 6z"/></svg></button>
                        </div>
                        <div class="vscroll"><svg class="ic"><path stroke="#444" stroke-width="2" d="M4 12l5-5 5 5"/></svg><i></i><svg class="ic"><path stroke="#444" stroke-width="2" d="M4 6l5 5 5-5"/></svg></div>
                    </div>
                    <div class="layout-bar">
                        <div class="layout-nav">
                            <button aria-label="第一个"><svg class="ic"><path stroke="#555" stroke-width="2" d="M5 4v10"/><path fill="#555" stroke="none" d="M13 4v10L7 9z"/></svg></button>
                            <button aria-label="上一个"><svg class="ic"><path fill="#555" stroke="none" d="M12 4v10L6 9z"/></svg></button>
                            <button aria-label="下一个"><svg class="ic"><path fill="#555" stroke="none" d="M6 4v10l6-5z"/></svg></button>
                            <button aria-label="最后一个"><svg class="ic"><path stroke="#555" stroke-width="2" d="M13 4v10"/><path fill="#555" stroke="none" d="M5 4v10l6-5z"/></svg></button>
                        </div>
                        <button class="layout model"><span>模型</span></button>
                        <button class="layout"><span>布局1</span></button>
                        <button class="layout"><span>布局2</span></button>
                        <div class="hscroll"><b></b><svg class="ic tiny" viewBox="0 0 18 18"><path stroke="#333" stroke-width="3" d="M12 3L6 9l6 6"/></svg><i></i><svg class="ic tiny" viewBox="0 0 18 18"><path stroke="#333" stroke-width="3" d="M6 3l6 6-6 6"/></svg></div>
                    </div>
                </div>

                <div class="right-dock">
                    <div class="toolbar vertical">
                        <span class="grip"></span>
                        <button aria-label="删除"><svg class="ic"><use href="#erase"/></svg></button>
                        <button aria-label="复制"><svg class="ic"><use href="#copy"/></svg></button>
                        <button aria-label="镜像"><svg class="ic"><use href="#mirror"/></svg></button>
                        <button aria-label="偏移"><svg class="ic"><use href="#offset"/></svg></button>
                        <button aria-label="阵列"><svg class="ic"><use href="#array"/></svg></button>
                        <button aria-label="移动"><svg class="ic"><use href="#move"/></svg></button>
                        <button aria-label="旋转"><svg class="ic"><use href="#rotate"/></svg></button>
                        <button aria-label="缩放"><svg class="ic"><use href="#scale"/></svg></button>
                        <button aria-label="拉伸"><svg class="ic"><use href="#stretch"/></svg></button>
                        <button aria-label="修剪"><svg class="ic"><use href="#trim"/></svg></button>
                        <button aria-label="延伸"><svg class="ic"><use href="#extend"/></svg></button>
                        <button aria-label="打断于点"><svg class="ic"><use href="#breakpt"/></svg></button>
                        <button aria-label="打断"><svg class="ic"><use href="#break"/></svg></button>
                        <button aria-label="合并"><svg class="ic"><use href="#join"/></svg></button>
                        <button aria-label="倒角"><svg class="ic"><use href="#chamfer"/></svg></button>
                        <button aria-label="圆角"><svg class="ic"><use href="#fillet"/></svg></button>
                        <button aria-label="光顺曲线"><svg class="ic"><use href="#blend"/></svg></button>
                        <button aria-label="分解"><svg class="ic"><use href="#explode"/></svg></button>
                    </div>
                    <div class="toolbar vertical">
                        <span class="grip"></span>
                        <button aria-label="前置"><svg class="ic"><use href="#order1"/></svg></button>
                        <button aria-label="后置"><svg class="ic"><use href="#order2"/></svg></button>
                        <button aria-label="置于对象之上"><svg class="ic"><use href="#order3"/></svg></button>
                        <button aria-label="置于对象之下"><svg class="ic"><use href="#order4"/></svg></button>
                        <span class="sep"></span>
                        <button aria-label="文字前置"><svg class="ic"><use href="#abc"/></svg></button>
                        <button aria-label="图案填充后置"><svg class="ic"><use href="#hatchback"/></svg></button>
                    </div>
                </div>
            </section>

            <section class="layer-window">
                <div class="layer-body">
                    <div class="layer-head">
                        <p>当前图层: 圆</p>
                        <div class="layer-search"><input type="text" placeholder="搜索图层" aria-label="搜索图层"><svg class="ic"><circle cx="7" cy="7" r="4.500" fill="#dceef2"/><path stroke-width="3" d="M11 11l4 4"/></svg></div>
                    </div>
                    <div class="layer-tools">
                        <button aria-label="新建特性过滤器"><svg class="ic"><use href="#filter"/></svg></button>
                        <button aria-label="新建组过滤器"><svg class="ic"><use href="#groupfilter"/></svg></button>
                        <span class="sep"></span>
                        <button aria-label="图层状态管理器"><svg class="ic"><use href="#layers"/></svg></button>
                        <span class="gap"></span>
                        <button aria-label="新建图层"><svg class="ic"><use href="#newlayer"/></svg></button>
                        <button aria-label="新建冻结图层"><svg class="ic"><use href="#newfrozen"/></svg></button>
                        <button aria-label="删除图层"><svg class="ic small"><use href="#delete"/></svg></button>
                        <button aria-label="置为当前"><svg class="ic small"><use href="#check"/></svg></button>
                        <span class="fill"></span>
                        <button aria-label="刷新"><svg class="ic"><use href="#refresh"/></svg></button>
                        <button aria-label="设置"><svg class="ic"><use href="#wrench"/></svg></button>
                    </div>
                    <div class="layer-panes">
                        <div class="tree">
                            <div class="tree-head"><svg class="ic small"><use href="#filter"/></svg>过滤器<svg class="ic dbl"><path stroke="#222" stroke-width="2" d="M9 4L4 9l5 5M15 4l-5 5 5 5"/></svg></div>
                            <div class="tree-list">
                                <div><svg class="ic"><path fill="#fff" stroke="#888" d="M4.500 4.500h9v9h-9z"/><path stroke="#2c5cb0" d="M7 9.500h5M14 9.500h4"/></svg><svg class="ic small"><use href="#stack"/></svg><span class="picked">全部</span></div>
                                <div class="sub"><svg class="ic"><path stroke="#888" stroke-dasharray="1 1" d="M6.500 0v9.500h12"/></svg><svg class="ic small"><use href="#filter"/></svg><span>所有使用的图层</span></div>
                            </div>
                            <label class="tree-foot"><input type="checkbox">反转过滤器(I)<svg class="ic dbl"><path stroke="#222" stroke-width="2" d="M9 4L4 9l5 5M15 4l-5 5 5 5"/></svg></label>
                        </div>
                        <div class="grid">
                            <div class="grid-area">
                                <table>
                                    <colgroup><col class="c-st"><col class="c-nm"><col class="c-on"><col class="c-fz"><col class="c-lk"><col class="c-cl"><col class="c-lt"><col class="c-lw"><col class="c-tr"><col class="c-ps"><col class="c-pl"><col class="c-vp"><col></colgroup>
                                    <thead><tr><th>状</th><th>名称</th><th>开</th><th>冻...</th><th>锁..</th><th>颜色</th><th>线型</th><th>线宽</th><th>透...</th><th>打...</th><th>打</th><th>新</th><th>说</th></tr></thead>
                                    <tbody>
                                        <tr><td><svg class="ic small"><use href="#sheet"/></svg></td><td>0</td><td><svg class="ic small"><use href="#lamp"/></svg></td><td><svg class="ic small"><use href="#sun"/></svg></td><td><svg class="ic small"><use href="#unlock"/></svg></td><td><i class="chip white"></i>白</td><td>Conti...</td><td><i class="rule"></i>默认</td><td>0</td><td class="dim">Col...</td><td><svg class="ic small"><use href="#print"/></svg></td><td><svg class="ic small"><use href="#vpnew"/></svg></td><td></td></tr>
                                        <tr><td><svg class="ic small"><use href="#sheetoff"/></svg></td><td>Defpoi...</td><td><svg class="ic small"><use href="#lamp"/></svg></td><td><svg class="ic small"><use href="#sun"/></svg></td><td><svg class="ic small"><use href="#unlock"/></svg></td><td><i class="chip white"></i>白</td><td>Conti...</td><td><i class="rule"></i>默认</td><td>0</td><td class="dim">Col...</td><td><svg class="ic small faded"><use href="#print"/></svg></td><td><svg class="ic small"><use href="#vpnew"/></svg></td><td></td></tr>
                                        <tr><td><svg class="ic small"><use href="#sheet"/></svg></td><td>标注</td><td><svg class="ic small"><use href="#lamp"/></svg></td><td><svg class="ic small"><use href="#sun"/></svg></td><td><svg class="ic small"><use href="#unlock"/></svg></td><td><i class="chip pink"></i>2...</td><td>Conti...</td><td><i class="rule"></i>默认</td><td>0</td><td class="dim">Col...</td><td><svg class="ic small"><use href="#print"/></svg></td><td><svg class="ic small"><use href="#vpnew"/></svg></td><td></td></tr>
                                        <tr class="picked"><td><svg class="ic small"><use href="#check"/></svg></td><td>圆</td><td><svg class="ic small"><use href="#lamp"/></svg></td><td><svg class="ic small"><use href="#sun"/></svg></td><td><svg class="ic small"><use href="#unlock"/></svg></td><td><i class="chip green"></i>1...</td><td>Conti...</td><td><i class="rule"></i>默认</td><td>0</td><td class="dim">Col...</td><td><svg class="ic small"><use href="#print"/></svg></td><td><svg class="ic small"><use href="#vpnew"/></svg></td><td></td></tr>
                                        <tr><td><svg class="ic small"><use href="#sheet"/></svg></td><td>轴线</td><td><svg class="ic small"><use href="#lamp"/></svg></td><td><svg class="ic small"><use href="#sun"/></svg></td><td><svg class="ic small"><use href="#unlock"/></svg></td><td><i class="chip blue"></i>蓝</td><td>CENT...</td><td><i class="rule"></i>0....</td><td>0</td><td class="dim">Col...</td><td><svg class="ic small"><use href="#print"/></svg></td><td><svg class="ic small"><use href="#vpnew"/></svg></td><td></td></tr>
                                    </tbody>
                                </table>
                            </div>
                            <div class="grid-scroll"><svg class="ic"><path stroke="#555" stroke-width="2" d="M11 5L7 9l4 5"/></svg><i></i><svg class="ic"><path stroke="#555" stroke-width="2" d="M7 5l4 4-4 5"/></svg></div>
                        </div>
                    </div>
                    <p class="layer-status">全部: 显示了 5 个图层，共 5 个图层</p>
                </div>
                <div class="layer-bar">
                    <button aria-label="关闭"><svg class="ic"><path stroke="#000" stroke-width="2" d="M5 4l8 9M13 4l-8 9"/></svg></button>
                    <button aria-label="自动隐藏"><svg class="ic"><path fill="#000" stroke="#000" d="M7 6L3 9.500 7 13zM9 6l4 3.500L9 13zM15.500 4v11"/></svg></button>
                    <button aria-label="特性"><svg class="ic"><path fill="#000" stroke="#000" d="M3 4h12v10H3z"/><path stroke="#fff" d="M4 6.500h11M5 9h4v4H5zM12 9h3M12 12h3"/></svg></button>
                    <span class="layer-name">图层特性管理器</span>
                    <svg class="ic"><use href="#stack"/></svg>
                </div>
            </section>
        </div>
        <div class="watermark">CSDN @喜欢星期五</div>
    </main>
</body>
</html>
```
FILE: styles.css
```css
* {
    box-sizing: border-box;
}
body {
    margin: 0;
    height: 100vh;
    display: flex;
    flex-direction: column;
    overflow: hidden;
    background: #fff;
    color: #000;
    font-family: "Open Sans", "Noto Sans CJK SC", sans-serif;
    font-size: 15px;
    line-height: 20px;
}
button, input, select {
    font: inherit;
    color: inherit;
    margin: 0;
    padding: 0;
    border: 0;
    background: none;
    border-radius: 0;
}
button {
    display: flex;
    align-items: center;
    justify-content: center;
    flex-shrink: 0;
    white-space: nowrap;
}
h1, h2, p, ul {
    margin: 0;
    padding: 0;
    font-size: 15px;
    font-weight: normal;
    list-style: none;
}
.symbols {
    position: absolute;
}
.ic {
    width: 18px;
    height: 18px;
    flex-shrink: 0;
    fill: none;
    stroke: #3a414d;
    stroke-width: 1px;
}
.ic.big {
    width: 20px;
    height: 20px;
}
.ic.small {
    width: 16px;
    height: 16px;
}
.ic.tiny {
    width: 10px;
    height: 10px;
}
.chip {
    display: inline-block;
    flex-shrink: 0;
    width: 11px;
    height: 12px;
    border: 1px solid #000;
}
.green { background: #00a527; }
.white { background: #fff; }
.pink { background: #ff007f; }
.blue { background: #00f; }
.rule {
    display: inline-block;
    flex-shrink: 0;
    width: 35px;
    height: 1px;
    background: #000;
}
.rule.long {
    width: 60px;
}

/* desktop behind the window */
.page-top {
    height: 117px;
    flex-shrink: 0;
    padding-left: 117px;
}
.cursor-mark {
    display: block;
    width: 2px;
    height: 3px;
    background: #5a55c8;
}
.desktop {
    position: relative;
    flex: 1;
    min-height: 0;
    display: flex;
    flex-direction: column;
    padding-left: 5px;
    background: linear-gradient(#4588cc, #5d9bd6 20%, #a8cdca 38%, #cfc5ae 55%, #b9a58d 67%, #4c8aa3 70%, #c3c9bf 80%, #6da9c6);
}
.desk-icons {
    height: 24px;
    flex-shrink: 0;
    margin-left: -5px;
    width: calc(100% + 5px);
    border-bottom: 1px solid #667;
    background: linear-gradient(90deg, #3b83d3, #2d76d2 17%, #7695c5 18%, #2d76d2 20%, #3177cb 31%, #6c8fba 36%, #b6bbb3 40%, #cdc6b3 46%, #a29f95 50%, #507aa4 54%, #376cab 67%, #8f9faa 71%, #b9b8a6 77%, #47709a 81%, #999da4 87%, #7993ac 90%, #0a52a0 93%, #064b9b);
}
.epic {
    font: bold 20px "Liberation Sans", sans-serif;
    fill: #fff;
}

.app {
    position: relative;
    flex: 1;
    min-height: 0;
    display: flex;
    flex-direction: column;
    background: #686868;
}
.titlebar {
    position: relative;
    display: flex;
    align-items: flex-end;
    height: 39px;
    flex-shrink: 0;
    background: #fff;
    border-bottom: 2px solid #333;
}
.app-button {
    position: absolute;
    left: 0;
    top: 8px;
    z-index: 2;
    width: 41px;
    height: 41px;
    border: 1px solid #111;
    background: linear-gradient(#d9d9d9, #777);
}
.quick, .info {
    display: flex;
    align-items: center;
    height: 30px;
    border: 1px solid #666;
    border-bottom: 0;
    background: linear-gradient(#b2b2b2, #858585);
}
.quick {
    width: 532px;
    padding-left: 45px;
}
.quick > button {
    width: 30px;
}
.quick > button.drop, .info > button.drop {
    width: 15px;
}
.quick .combo {
    flex: 1;
    height: 28px;
    padding: 0 2px 0 1px;
    background: linear-gradient(#f2f2f2, #d0d0d0);
    border: 1px solid #777;
}
.quick .combo select {
    padding-left: 4px;
}
.quick .quick-more {
    width: 20px;
}
.title {
    flex: 1;
    align-self: center;
    display: flex;
    justify-content: center;
    gap: 20px;
    font-size: 16px;
    white-space: nowrap;
}
.info {
    width: 556px;
}
.info > button {
    width: 30px;
}
.info .info-toggle {
    width: 16px;
}
.info-search {
    width: 224px;
    height: 27px;
    padding: 0 5px;
    background: #f8f8f8;
    border: 1px solid #777;
    font-size: 14px;
    font-style: italic;
}
.info-search::placeholder, .layer-search input::placeholder {
    color: #666;
    opacity: 1;
}
.info .login {
    width: 152px;
    justify-content: flex-start;
    gap: 6px;
    padding-left: 5px;
    color: #fff;
}
.login .tiny {
    margin-left: auto;
    margin-right: 6px;
}
.info-sep {
    width: 1px;
    height: 24px;
    margin: 0 6px;
    background: #aaa;
}
.win-buttons {
    display: flex;
    align-self: stretch;
    padding-left: 29px;
}
.win-buttons button {
    width: 59px;
}

.menubar {
    display: flex;
    height: 25px;
    flex-shrink: 0;
    padding-left: 42px;
    background: linear-gradient(#a2a2a2, #555);
    color: #fff;
}
.menubar > button {
    height: 24px;
    padding: 0 14px;
}
.menubar .active {
    border: 1px solid #111;
    background: linear-gradient(#777, #444);
}
.mdi {
    display: flex;
    margin-left: auto;
}

.file-tabs {
    display: flex;
    align-items: flex-end;
    height: 33px;
    flex-shrink: 0;
    padding-left: 20px;
    border-bottom: 1px solid #a8a8a8;
    background: linear-gradient(#a8a8a8, #8f8f8f);
}
.file-tab {
    position: relative;
    height: 29px;
    min-width: 154px;
    padding: 0 30px 0 20px;
    justify-content: flex-start;
    color: #4b4b4b;
}
.file-tab::before, .file-tab::after {
    content: "";
    position: absolute;
    top: 1px;
    bottom: 0;
    width: 50%;
    border-top: 2px solid #bbb;
    background: linear-gradient(#b0b0b0, #969696);
}
.file-tab::before {
    left: 5px;
    border-left: 2px solid #bbb;
    border-radius: 8px 0 0 0;
    transform: skewX(-20deg);
}
.file-tab::after {
    right: 0;
    border-right: 2px solid #bbb;
    border-radius: 0 8px 0 0;
    transform: skewX(20deg);
}
.file-tab span, .file-tab svg {
    position: relative;
    z-index: 1;
}
.file-tab.current {
    padding-right: 18px;
    color: #000;
}
.file-tab.current::before, .file-tab.current::after {
    border-color: #ddd;
    background: linear-gradient(#dcdcdc, #aaa);
}
.file-tab .close {
    margin-left: 34px;
}
.add-tab {
    margin-bottom: 4px;
}

/* toolbars */
.docks {
    height: 86px;
    flex-shrink: 0;
    padding-top: 3px;
}
.dock-row {
    display: flex;
    gap: 1px;
    margin-bottom: 2px;
}
.toolbar {
    display: flex;
    align-items: center;
    height: 25px;
    border: 1px solid #333;
    background: #ececec;
}
.toolbar button {
    width: 23px;
    height: 22px;
}
.toolbar .drop {
    width: 13px;
}
.grip {
    width: 8px;
    align-self: stretch;
    flex-shrink: 0;
    border: 2px solid #555;
    background: repeating-linear-gradient(#222 0 1px, #777 1px 2px);
}
.sep {
    width: 2px;
    height: 20px;
    margin: 0 2px;
    flex-shrink: 0;
    border-left: 1px solid #888;
    background: #fff;
}
.combo {
    display: flex;
    align-items: center;
    height: 22px;
    padding-left: 4px;
    background: #e1e1e1;
    border: 1px solid #c6c6c6;
}
.combo select {
    appearance: none;
    flex: 1;
    min-width: 0;
    height: 20px;
    opacity: 1;
}
.combo .inset {
    padding-left: 13px;
}
.combo .chev {
    width: 15px;
    height: 15px;
    margin-right: 2px;
}
.w120 { width: 120px; }
.w126 { width: 126px; }
.w150 { width: 150px; }
.w160 { width: 160px; }
.space-combo {
    width: 174px;
    padding-left: 9px;
}
.layer-combo {
    width: 300px;
    padding-left: 2px;
}
.layer-flags {
    display: flex;
    align-items: center;
    margin-right: 5px;
}
.layer-flags .chip {
    margin-left: 3px;
}
.bylayer {
    font-family: "Liberation Serif", serif;
    font-size: 16px;
}
.bylayer .combo select {
    padding-left: 4px;
}
.bylayer .off {
    background: #ccc;
    color: #888;
}
.off .chev {
    opacity: 0.4;
}
.toolbar.vertical {
    flex-direction: column;
    width: 25px;
    height: auto;
    align-self: flex-start;
}
.vertical .grip {
    width: auto;
    height: 8px;
    background: repeating-linear-gradient(90deg, #222 0 1px, #777 1px 2px);
}
.vertical .sep {
    width: 19px;
    height: 2px;
    margin: 2px 0;
    border-left: 0;
    border-top: 1px solid #888;
}
.toolbar .mtext {
    color: #333;
    font: bold 18px "Liberation Sans", sans-serif;
}

/* palette on the left */
.workspace {
    flex: 1;
    min-height: 0;
    display: flex;
    padding-bottom: 3px;
}
.palette {
    display: flex;
    flex-direction: column;
    width: 171px;
    margin: 2px 5px -3px 0;
    flex-shrink: 0;
}
.palette-title {
    display: flex;
    align-items: center;
    gap: 6px;
    width: 144px;
    height: 25px;
    padding-left: 3px;
    border-radius: 4px 6px 0 0;
    background: #a2a2a2;
}
.dots {
    width: 3px;
    height: 14px;
    background: repeating-linear-gradient(#444 0 1px, #a2a2a2 1px 2px);
}
.palette-main {
    flex: 1;
    min-height: 0;
    display: flex;
}
.tools {
    width: 144px;
    padding-top: 4px;
    background: #efefef;
}
.tools li {
    display: flex;
    align-items: center;
    gap: 5px;
    height: 42px;
    padding-left: 20px;
    white-space: nowrap;
}
.tool-ic {
    width: 30px;
    height: 32px;
}
.side-tabs {
    width: 27px;
    padding-top: 3px;
    overflow: hidden;
}
.side-tabs button {
    width: 26px;
    height: 60px;
    margin-bottom: 1px;
    writing-mode: vertical-rl;
    text-orientation: sideways;
    transform: rotate(180deg);
    border-radius: 3px 0 0 3px;
    border-left: 1px solid #444;
    background: #cdcdcd;
}
.side-tabs .current {
    background: #efefef;
}

/* drawing area */
.drawing {
    flex: 1;
    min-width: 0;
    display: flex;
    flex-direction: column;
    margin: 0 4px;
    border: 1px solid #999;
    border-left: 2px solid #999;
    border-bottom: 2px solid #fff;
    border-right: 2px solid #e3e3e3;
}
.canvas-row {
    flex: 1;
    min-height: 0;
    display: flex;
}
.canvas {
    position: relative;
    flex: 1;
    min-width: 0;
    background: #212830;
}
.scene {
    position: absolute;
    width: 100%;
    height: 100%;
}
.axis {
    stroke: #00f;
    stroke-dasharray: 20 3 4 3;
}
.dims {
    font: 29px "Liberation Sans", sans-serif;
    fill: #0f0;
}
.view-label {
    position: absolute;
    left: 4px;
    top: 4px;
    color: #eee;
    font-family: "Liberation Sans", "Noto Sans CJK SC", sans-serif;
    font-size: 13px;
    line-height: 18px;
}
.ucs {
    position: absolute;
    left: 20px;
    bottom: 14px;
}
.viewcube {
    position: absolute;
    top: 14px;
    right: 15px;
    display: grid;
    grid-template: 42px 52px 42px / 42px 52px 42px;
    place-items: center;
    color: #aaa;
    font: 18px "Noto Sans CJK SC", sans-serif;
}
.viewcube::before {
    content: "";
    position: absolute;
    inset: 8px;
    border: 13px solid #454a51;
    border-radius: 50%;
}
.viewcube span {
    position: relative;
}
.north {
    grid-area: 1 / 2;
    align-self: start;
}
.west {
    grid-area: 2 / 1;
    justify-self: start;
}
.east {
    grid-area: 2 / 3;
    justify-self: end;
}
.south {
    grid-area: 3 / 2;
    align-self: end;
}
.viewcube .face {
    grid-area: 2 / 2;
    width: 52px;
    height: 52px;
    padding: 3px 0;
    border: 9px solid #adafb1;
    background: #9da0a6;
    color: #555b63;
    font-size: 28px;
    line-height: 28px;
    text-align: center;
}
.wcs {
    position: absolute;
    top: 170px;
    right: 59px;
    width: 48px;
    height: 18px;
    gap: 5px;
    border: 1px solid #777a8a;
    border-radius: 4px;
    background: #8f91a0;
    color: #4c4f5c;
    font: 11px "Liberation Sans", sans-serif;
}
.vscroll {
    display: flex;
    flex-direction: column;
    align-items: center;
    width: 21px;
    padding: 2px 0;
    background: #f0f0f0;
}
.vscroll i {
    width: 19px;
    height: 21px;
    margin: auto 0;
    position: relative;
    top: -50px;
    background: #cdcdcd;
}
.layout-bar {
    display: flex;
    height: 20px;
    background: #f0f0f0;
}
.layout-nav {
    display: flex;
    margin-right: 5px;
}
.layout-nav button {
    width: 18px;
    border: 1px solid #999;
    border-left-color: #fff;
}
.layout {
    position: relative;
    width: 59px;
    height: 18px;
}
.layout span {
    position: relative;
}
.layout::after {
    content: "";
    position: absolute;
    inset: 0;
    border-right: 2px solid #777;
    border-bottom: 1px solid #999;
    transform: skewX(-20deg);
}
.layout.model {
    width: 50px;
    margin-right: -1px;
    color: #fff;
}
.layout.model::before {
    content: "";
    position: absolute;
    inset: 0 -4px 0 -4px;
    z-index: 1;
    background: #212830;
    clip-path: polygon(0 0, 100% 0, 90% 100%, 10% 100%);
}
.layout.model span {
    z-index: 2;
}
.layout.model::after {
    border: 0;
}
.hscroll {
    display: flex;
    align-items: center;
    width: 794px;
    margin-left: auto;
    padding-right: 26px;
}
.hscroll b {
    width: 5px;
    height: 18px;
    margin-right: 7px;
    background: #ccc;
}
.hscroll i {
    width: 21px;
    height: 18px;
    margin-left: auto;
    margin-right: 39px;
    background: #cdcdcd;
}
.right-dock {
    width: 28px;
    flex-shrink: 0;
}

/* layer properties manager */
.layer-window {
    position: absolute;
    top: 147px;
    right: 217px;
    display: flex;
    width: 784px;
    height: 427px;
    border: 1px solid #555;
    border-radius: 3px;
    background: #cbcbcb;
}
.layer-body {
    flex: 1;
    min-width: 0;
    display: flex;
    flex-direction: column;
    margin: 2px 0 2px 2px;
    padding: 4px 2px 0 1px;
    border: 1px solid #555;
    border-radius: 4px;
    background: #f0f0f0;
}
.layer-head {
    display: flex;
    justify-content: space-between;
    height: 26px;
    padding-left: 3px;
}
.layer-head p {
    flex: 1;
    margin-right: 5px;
    padding-top: 2px;
    border-top: 1px solid #d8d8d8;
}
.layer-search {
    display: flex;
    align-items: center;
    width: 125px;
    height: 26px;
    margin-top: 2px;
    padding: 0 3px 0 2px;
    border: 1px solid #777;
    background: #fff;
}
.layer-search input {
    flex: 1;
    min-width: 0;
}
.layer-tools {
    display: flex;
    align-items: center;
    height: 22px;
    margin-bottom: 4px;
    padding-right: 6px;
}
.layer-tools button {
    width: 23px;
}
.layer-tools .gap {
    width: 51px;
}
.layer-tools .fill {
    flex: 1;
}
.layer-panes {
    display: flex;
    gap: 4px;
    height: 331px;
}
.tree {
    display: flex;
    flex-direction: column;
    width: 200px;
    border: 1px solid #666;
}
.tree-head, .tree-foot {
    display: flex;
    align-items: center;
    height: 21px;
    padding-left: 4px;
    flex-shrink: 0;
}
.dbl {
    margin-left: auto;
    margin-right: 1px;
}
.tree-list {
    flex: 1;
    padding: 1px 0 0 3px;
    border: 1px solid #777;
    background: #fff;
}
.tree-list div {
    display: flex;
    align-items: center;
    gap: 4px;
    height: 16px;
}
.tree-list .sub {
    padding-left: 18px;
}
.tree-list span {
    line-height: 18px;
}
.tree-list .picked {
    background: #f0f0f0;
}
.tree-foot input {
    appearance: none;
    width: 16px;
    height: 16px;
    margin-right: 4px;
    border: 1px solid #333;
    background: #fff;
}
.grid {
    flex: 1;
    min-width: 0;
    display: flex;
    flex-direction: column;
    border: 1px solid #000;
    border-top-width: 2px;
    background: #fff;
}
.grid-area {
    flex: 1;
    overflow: hidden;
    background: linear-gradient(#a5a5a5, #a5a5a5) 96px 0 / 2px 100% no-repeat;
}
table {
    width: 100%;
    table-layout: fixed;
    border-collapse: separate;
    border-spacing: 0;
}
.c-st { width: 22px; }
.c-nm { width: 76px; }
.c-on { width: 24px; }
.c-fz { width: 41px; }
.c-lk { width: 31px; }
.c-cl { width: 48px; }
.c-lt { width: 64px; }
.c-lw { width: 67px; }
.c-tr { width: 55px; }
.c-ps { width: 54px; }
.c-pl { width: 25px; }
.c-vp { width: 24px; }
th {
    height: 23px;
    padding: 0 0 0 7px;
    overflow: hidden;
    border-right: 1px solid #ddd;
    border-bottom: 1px solid #999;
    font-weight: normal;
    text-align: left;
    white-space: nowrap;
}
td {
    height: 22px;
    padding: 0 0 0 5px;
    overflow: hidden;
    white-space: nowrap;
}
th:nth-child(2), td:nth-child(2) {
    border-right: 2px solid #a5a5a5;
}
td:nth-child(1) {
    padding-left: 0;
}
td:nth-child(3), td:nth-child(6), td:nth-child(8), td:nth-child(11) {
    padding-left: 2px;
}
td:nth-child(4) {
    padding-left: 10px;
}
td svg {
    display: block;
}
td .chip {
    width: 16px;
    height: 16px;
    margin-right: 8px;
    vertical-align: middle;
}
td .rule {
    width: 21px;
    margin-right: 9px;
    vertical-align: middle;
}
tr.picked {
    background: #e0e0e0;
}
.dim {
    color: #888;
}
.faded {
    opacity: 0.3;
}
.grid-scroll {
    display: flex;
    align-items: center;
    height: 19px;
    padding: 0 2px;
    background: #f0f0f0;
}
.grid-scroll i {
    width: 340px;
    height: 19px;
    margin-right: auto;
    background: #cbcbcb;
}
.layer-status {
    margin-top: 6px;
    padding: 3px;
    border-top: 1px solid #d8d8d8;
}
.layer-bar {
    display: flex;
    flex-direction: column;
    align-items: center;
    width: 26px;
    padding-bottom: 1px;
}
.layer-bar button {
    height: 19px;
}
.layer-name {
    margin-top: auto;
    margin-bottom: 10px;
    writing-mode: vertical-rl;
    text-orientation: sideways;
    transform: rotate(180deg);
}
.watermark {
    position: absolute;
    right: 17px;
    bottom: 4px;
    color: rgba(245, 245, 245, 0.8);
    font-family: "Liberation Sans", "Noto Sans CJK SC", sans-serif;
    font-size: 20px;
    line-height: 30px;
    text-shadow: 1px 1px 1px #444;
}
```
